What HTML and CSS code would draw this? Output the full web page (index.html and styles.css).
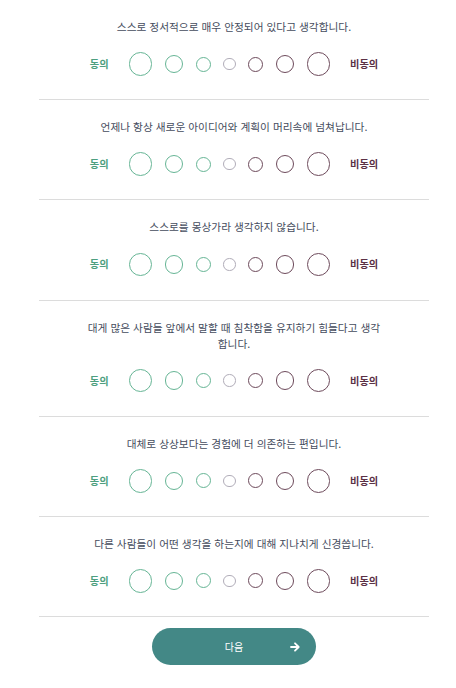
FILE: index.html
```html
<!DOCTYPE html>
<html lang="ko">
<head>
<meta charset="utf-8">
<link rel="stylesheet" href="styles.css">
</head>
<body>
<div class="quiz">
  <div class="item">
    <p class="q">스스로 정서적으로 매우 안정되어 있다고 생각합니다.</p>
    <div class="scale">
      <span class="lab agree">동의</span>
      <div class="dots">
        <span class="d g s1"></span><span class="d g s2"></span><span class="d g s3"></span><span class="d n s4"></span><span class="d p s3"></span><span class="d p s2"></span><span class="d p s1"></span>
      </div>
      <span class="lab disagree">비동의</span>
    </div>
  </div>
  <div class="item">
    <p class="q">언제나 항상 새로운 아이디어와 계획이 머리속에 넘쳐납니다.</p>
    <div class="scale">
      <span class="lab agree">동의</span>
      <div class="dots">
        <span class="d g s1"></span><span class="d g s2"></span><span class="d g s3"></span><span class="d n s4"></span><span class="d p s3"></span><span class="d p s2"></span><span class="d p s1"></span>
      </div>
      <span class="lab disagree">비동의</span>
    </div>
  </div>
  <div class="item">
    <p class="q">스스로를 몽상가라 생각하지 않습니다.</p>
    <div class="scale">
      <span class="lab agree">동의</span>
      <div class="dots">
        <span class="d g s1"></span><span class="d g s2"></span><span class="d g s3"></span><span class="d n s4"></span><span class="d p s3"></span><span class="d p s2"></span><span class="d p s1"></span>
      </div>
      <span class="lab disagree">비동의</span>
    </div>
  </div>
  <div class="item">
    <p class="q">대게 많은 사람들 앞에서 말할 때 침착함을 유지하기 힘들다고 생각합니다.</p>
    <div class="scale">
      <span class="lab agree">동의</span>
      <div class="dots">
        <span class="d g s1"></span><span class="d g s2"></span><span class="d g s3"></span><span class="d n s4"></span><span class="d p s3"></span><span class="d p s2"></span><span class="d p s1"></span>
      </div>
      <span class="lab disagree">비동의</span>
    </div>
  </div>
  <div class="item">
    <p class="q">대체로 상상보다는 경험에 더 의존하는 편입니다.</p>
    <div class="scale">
      <span class="lab agree">동의</span>
      <div class="dots">
        <span class="d g s1"></span><span class="d g s2"></span><span class="d g s3"></span><span class="d n s4"></span><span class="d p s3"></span><span class="d p s2"></span><span class="d p s1"></span>
      </div>
      <span class="lab disagree">비동의</span>
    </div>
  </div>
  <div class="item">
    <p class="q">다른 사람들이 어떤 생각을 하는지에 대해 지나치게 신경씁니다.</p>
    <div class="scale">
      <span class="lab agree">동의</span>
      <div class="dots">
        <span class="d g s1"></span><span class="d g s2"></span><span class="d g s3"></span><span class="d n s4"></span><span class="d p s3"></span><span class="d p s2"></span><span class="d p s1"></span>
      </div>
      <span class="lab disagree">비동의</span>
    </div>
  </div>
  <div class="actions">
    <button class="next" type="button">
      <span class="next-label">다음</span>
      <svg class="arrow" width="10" height="10" viewBox="0 0 10 10" aria-hidden="true">
        <path d="M1 5H8.5M5 1.3L8.7 5L5 8.7" fill="none" stroke="#fff" stroke-width="1.8" stroke-linecap="round" stroke-linejoin="round"/>
      </svg>
    </button>
  </div>
</div>
</body>
</html>
```
FILE: styles.css
```css
html, body {
  margin: 0;
  padding: 0;
  background: #ffffff;
}
body {
  font-family: "Noto Sans CJK KR", "Noto Sans", sans-serif;
  color: #454c5d;
}
.quiz {
  padding: 0 27px 0 39px;
}
.item {
  padding: 19px 0 23.2px;
  border-bottom: 1px solid #dcdcdc;
  display: flex;
  flex-direction: column;
  align-items: center;
}
.q {
  margin: 0;
  max-width: 300px;
  font-size: 10.7px;
  line-height: 16px;
  text-align: center;
}
.scale {
  margin-top: 17px;
  display: flex;
  align-items: center;
  gap: 20px;
  height: 24px;
}
.lab {
  font-size: 10.2px;
  font-weight: 700;
  line-height: 16px;
}
.agree { color: #4e9f80; }
.disagree { color: #5b3146; }
.dots {
  display: flex;
  align-items: center;
  gap: 12.5px;
}
.d {
  display: block;
  box-sizing: border-box;
  border-radius: 50%;
  border: 1.5px solid;
}
.g { border-color: #66b595; }
.n { border-color: #b1adb9; }
.p { border-color: #6d4a5b; }
.s1 { width: 23.5px; height: 23.5px; }
.s2 { width: 18.5px; height: 18.5px; }
.s3 { width: 15px; height: 15px; }
.s4 { width: 12.5px; height: 12.5px; }
.actions {
  display: flex;
  justify-content: center;
  padding-top: 11px;
}
.next {
  width: 164px;
  height: 37px;
  border: 0;
  border-radius: 19px;
  background: #438886;
  color: #fff;
  font-family: "Noto Sans CJK KR", "Noto Sans", sans-serif;
  font-size: 10px;
  display: flex;
  align-items: center;
  padding: 0 16px;
  position: relative;
}
.next-label {
  flex: 1;
  text-align: center;
}
.arrow {
  position: absolute;
  right: 16px;
  top: 13.5px;
}
```
